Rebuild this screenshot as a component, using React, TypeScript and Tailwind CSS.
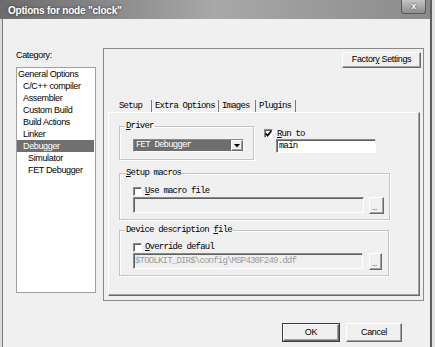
const mono = "font-['Liberation_Mono','Courier_New',monospace] text-[9px] tracking-[-0.8px] leading-[10px]";

const raised =
  "border border-t-white border-l-white border-r-[#6b6b6b] border-b-[#6b6b6b] bg-[#f0f0f0] shadow-[inset_-1px_-1px_0_#a0a0a0]";
const sunken =
  "border border-t-[#8a8a8a] border-l-[#8a8a8a] border-r-white border-b-white shadow-[inset_1px_1px_0_#5f5f5f]";

function CheckBox({ checked }: { checked?: boolean }) {
  return (
    <div className={`flex h-[9px] w-[9px] shrink-0 items-center justify-center bg-white ${sunken}`}>
      {checked && (
        <svg width="7" height="7" viewBox="0 0 7 7">
          <polyline points="0.8,3.4 2.6,5.6 6.3,0.9" fill="none" stroke="#000" strokeWidth="1.6" />
        </svg>
      )}
    </div>
  );
}

function Group({ label, children, className }: { label: React.ReactNode; children: React.ReactNode; className: string }) {
  return (
    <fieldset
      className={`border border-[#c4c4c4] px-[5px] shadow-[inset_1px_1px_0_#fff,1px_1px_0_#fff] ${className}`}
    >
      <legend className={`px-[1px] ${mono}`}>{label}</legend>
      {children}
    </fieldset>
  );
}

const categories = [
  { name: "General Options", indent: "pl-[1px]" },
  { name: "C/C++ compiler", indent: "pl-[6px]" },
  { name: "Assembler", indent: "pl-[6px]" },
  { name: "Custom Build", indent: "pl-[6px]" },
  { name: "Build Actions", indent: "pl-[6px]" },
  { name: "Linker", indent: "pl-[6px]" },
  { name: "Debugger", indent: "pl-[6px]", selected: true },
  { name: "Simulator", indent: "pl-[11px]" },
  { name: "FET Debugger", indent: "pl-[11px]" },
];

const tabs = [
  { name: "Setup", w: "w-[40px] pl-[7px]" },
  { name: "Extra Options", w: "w-[67px] pl-[3px]" },
  { name: "Images", w: "w-[37px] pl-[3px]" },
  { name: "Plugins", w: "w-[40px] pl-[3px]" },
];

export default function App() {
  return (
    <div className="flex h-[347px] w-[435px] overflow-hidden bg-[#e2e2e2] font-['Liberation_Sans',Arial,sans-serif] text-[9px] tracking-[-0.35px] text-black">
      <div className="flex w-[432px] shrink-0 flex-col border-r-2 border-[#5e5e5e]">
        {/* title bar */}
        <div className="flex h-[19px] shrink-0 items-start justify-between bg-gradient-to-r from-[#6c6c6c] via-[#a8a8a8] to-[#8b8b8b]">
          <span className="ml-[8px] mt-[3px] text-[10px] font-bold tracking-[-0.2px] text-white [text-shadow:0_0_3px_#2e2e2e]">
            Options for node "clock"
          </span>
          <div className="mr-[4px] flex h-[14px] w-[25px] items-center justify-center rounded-b-[3px] border border-t-0 border-[#5a5a5a] bg-gradient-to-b from-[#c4c4c4] to-[#8e8e8e] text-[9px] font-bold text-white [text-shadow:0_0_2px_#333]">
            x
          </div>
        </div>

        <div className="flex flex-1 bg-[#dcdcdc] pl-[2px]">
          <div className="flex flex-1 flex-col border-l border-[#7a7a7a] bg-[#f0f0f0]">
            <div className="flex">
              {/* category list */}
              <div className="ml-[13px] mt-[30px] flex w-[80px] flex-col">
                <span className="h-[12px] leading-[12px]">Category:</span>
                <div className="mt-[6px] h-[226px] border border-[#a0a0a0] bg-white">
                  {categories.map((c) => (
                    <div
                      key={c.name}
                      className={`mr-[1px] h-[12px] leading-[12px] ${c.indent} ${c.selected ? "bg-[#707070] text-white" : ""}`}
                    >
                      {c.name}
                    </div>
                  ))}
                </div>
              </div>

              {/* options panel */}
              <div className="ml-[7px] mt-[29px] flex h-[253px] w-[321px] flex-col border border-[#8a8a8a]">
                <div className="flex justify-end pr-[2px] pt-[3px]">
                  <div className={`flex h-[16px] w-[79px] items-center justify-center ${raised}`}>
                    Factor<span className="underline">y</span>&nbsp;Settings
                  </div>
                </div>

                <div className="ml-[4px] mt-[32px] flex h-[12px] items-stretch pl-[4px]">
                  {tabs.map((t) => (
                    <div key={t.name} className={`${t.w} border-r border-[#7a7a7a] ${mono} leading-[12px]`}>
                      {t.name}
                    </div>
                  ))}
                </div>

                <div className="ml-[4px] flex h-[184px] w-[312px] flex-col border border-t-white border-l-white border-r-[#6b6b6b] border-b-[#6b6b6b] shadow-[inset_-1px_-1px_0_#a0a0a0]">
                  <div className="flex items-start">
                    <Group
                      className="ml-[10px] mt-[8px] w-[135px] pb-[7px] pt-[8px]"
                      label={
                        <>
                          <span className="underline">D</span>river
                        </>
                      }
                    >
                      <div className={`ml-[8px] flex h-[13px] w-[111px] ${sunken} bg-white`}>
                        <div className={`flex-1 bg-[#6e6e6e] pl-[2px] text-white ${mono} leading-[11px]`}>FET Debugger</div>
                        <div className={`flex w-[12px] items-center justify-center ${raised}`}>
                          <svg width="6" height="4" viewBox="0 0 6 4">
                            <polygon points="0,0 6,0 3,3.5" fill="#000" />
                          </svg>
                        </div>
                      </div>
                    </Group>

                    <div className="ml-[10px] mt-[16px] flex flex-col">
                      <div className="flex h-[9px] items-center gap-[4px]">
                        <CheckBox checked />
                        <span className={mono}>
                          <span className="underline">R</span>un to
                        </span>
                      </div>
                      <div className={`ml-[12px] mt-[1px] h-[14px] w-[100px] bg-white pl-[2px] ${sunken} ${mono} leading-[12px]`}>
                        main
                      </div>
                    </div>
                  </div>

                  <Group
                    className="ml-[10px] mt-[8px] w-[270px] pb-[5px] pt-[8px]"
                    label={
                      <>
                        <span className="underline">S</span>etup macros
                      </>
                    }
                  >
                    <div className="ml-[8px] flex h-[10px] items-center gap-[3px]">
                      <CheckBox />
                      <span className={mono}>
                        <span className="underline">U</span>se macro file
                      </span>
                    </div>
                    <div className="ml-[8px] mt-[1px] flex items-start gap-[5px]">
                      <div className={`h-[16px] w-[231px] bg-[#f0f0f0] ${sunken}`} />
                      <div className={`flex h-[17px] w-[15px] items-end pl-[2px] text-[7px] leading-[10px] ${raised}`}>...</div>
                    </div>
                  </Group>

                  <Group
                    className="ml-[10px] mt-[5px] w-[270px] pb-[5px] pt-[7px]"
                    label={
                      <>
                        Device description <span className="underline">f</span>ile
                      </>
                    }
                  >
                    <div className="ml-[8px] flex h-[10px] items-center gap-[3px]">
                      <CheckBox />
                      <span className={mono}>
                        <span className="underline">O</span>verride defaul
                      </span>
                    </div>
                    <div className="ml-[8px] mt-[1px] flex items-start gap-[6px]">
                      <div className={`h-[16px] w-[230px] bg-[#f0f0f0] pl-[1px] text-[#9a9a9a] ${sunken} ${mono} leading-[14px]`}>
                        $TOOLKIT_DIR$\config\MSP430F249.ddf
                      </div>
                      <div className={`flex h-[17px] w-[13px] items-end pl-[2px] text-[7px] leading-[10px] ${raised}`}>...</div>
                    </div>
                  </Group>
                </div>
              </div>
            </div>

            {/* dialog buttons */}
            <div className="ml-[279px] mt-[22px] flex gap-[6px]">
              <div className="h-[19px] w-[58px] border border-[#3c3c3c]">
                <div className={`flex h-full w-full items-center justify-center ${raised}`}>OK</div>
              </div>
              <div className={`flex h-[19px] w-[56px] items-center justify-center ${raised}`}>Cancel</div>
            </div>
          </div>
        </div>
      </div>
    </div>
  );
}
